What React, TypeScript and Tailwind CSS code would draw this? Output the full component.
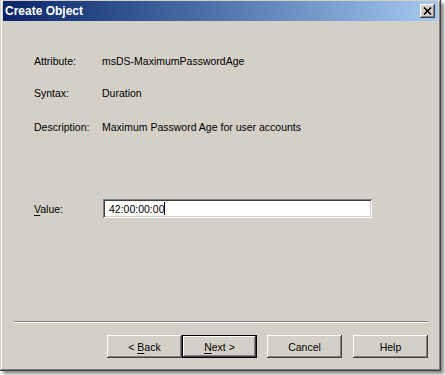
export default function App() {
  const bevel =
    "shadow-[inset_-1px_-1px_#404040,inset_1px_1px_#ffffff,inset_-2px_-2px_#808080]";
  return (
    <div className="w-[445px] h-[375px] bg-white font-['Liberation_Sans',Arial,sans-serif] text-black">
      <div className="w-[441px] h-[371px] bg-[#d4d0c8] flex flex-col shadow-[inset_-1px_-1px_#404040,inset_1px_1px_#d4d0c8,inset_-2px_-2px_#808080,inset_2px_2px_#ffffff,3px_3px_3px_rgba(0,0,0,0.45)]">
        {/* Title bar */}
        <div className="mx-[3px] mt-[1px] h-[20px] flex items-center pl-[2px] pr-[3px] bg-linear-to-r from-[#0a246a] to-[#a6caf0]">
          <div className="flex-1 text-white font-bold text-[12px] leading-[20px]">Create Object</div>
          <div className={`w-[15px] h-[14px] bg-[#d4d0c8] flex items-center justify-center ${bevel}`}>
            <svg width="9" height="8" viewBox="0 0 9 8">
              <path d="M1 0.5 L8 7.5 M8 0.5 L1 7.5" stroke="#000" strokeWidth="1.6" />
            </svg>
          </div>
        </div>

        {/* Body */}
        <div className="flex flex-col text-[10.5px] leading-[14px]">
          <div className="mt-[33px] pl-[34px] flex h-[14px] items-center">
            <div className="w-[68px]">Attribute:</div>
            <div>msDS-MaximumPasswordAge</div>
          </div>
          <div className="mt-[18px] pl-[34px] flex h-[14px] items-center">
            <div className="w-[68px]">Syntax:</div>
            <div>Duration</div>
          </div>
          <div className="mt-[20px] pl-[34px] flex h-[14px] items-center">
            <div className="w-[68px]">Description:</div>
            <div>Maximum Password Age for user accounts</div>
          </div>
          <div className="mt-[65px] pl-[34px] flex h-[19px] items-center">
            <div className="w-[69px]">
              <span className="underline decoration-1 underline-offset-2">V</span>alue:
            </div>
            <div className="w-[269px] h-[19px] bg-white flex items-center pl-[6px] shadow-[inset_1px_1px_#808080,inset_-1px_-1px_#ffffff,inset_2px_2px_#404040,inset_-2px_-2px_#d4d0c8]">
              <span>42:00:00:00</span>
              <span className="w-px h-[13px] bg-black"></span>
            </div>
          </div>

          {/* Separator */}
          <div className="mt-[103px] ml-[14px] w-[414px] h-[2px] border-t border-t-[#808080] border-b border-b-white"></div>

          {/* Buttons */}
          <div className="mt-[12px] pl-[107px] flex h-[23px]">
            <div className={`w-[75px] h-[23px] flex items-center justify-center ${bevel}`}>
              &lt;&nbsp;<span className="underline decoration-1 underline-offset-2">B</span>ack
            </div>
            <div className={`w-[75px] h-[23px] flex items-center justify-center border border-black ${bevel}`}>
              <span className="underline decoration-1 underline-offset-2">N</span>ext &gt;
            </div>
            <div className={`ml-[10px] w-[75px] h-[23px] flex items-center justify-center ${bevel}`}>
              Cancel
            </div>
            <div className={`ml-[11px] w-[75px] h-[23px] flex items-center justify-center ${bevel}`}>
              Help
            </div>
          </div>
        </div>
      </div>
    </div>
  );
}
